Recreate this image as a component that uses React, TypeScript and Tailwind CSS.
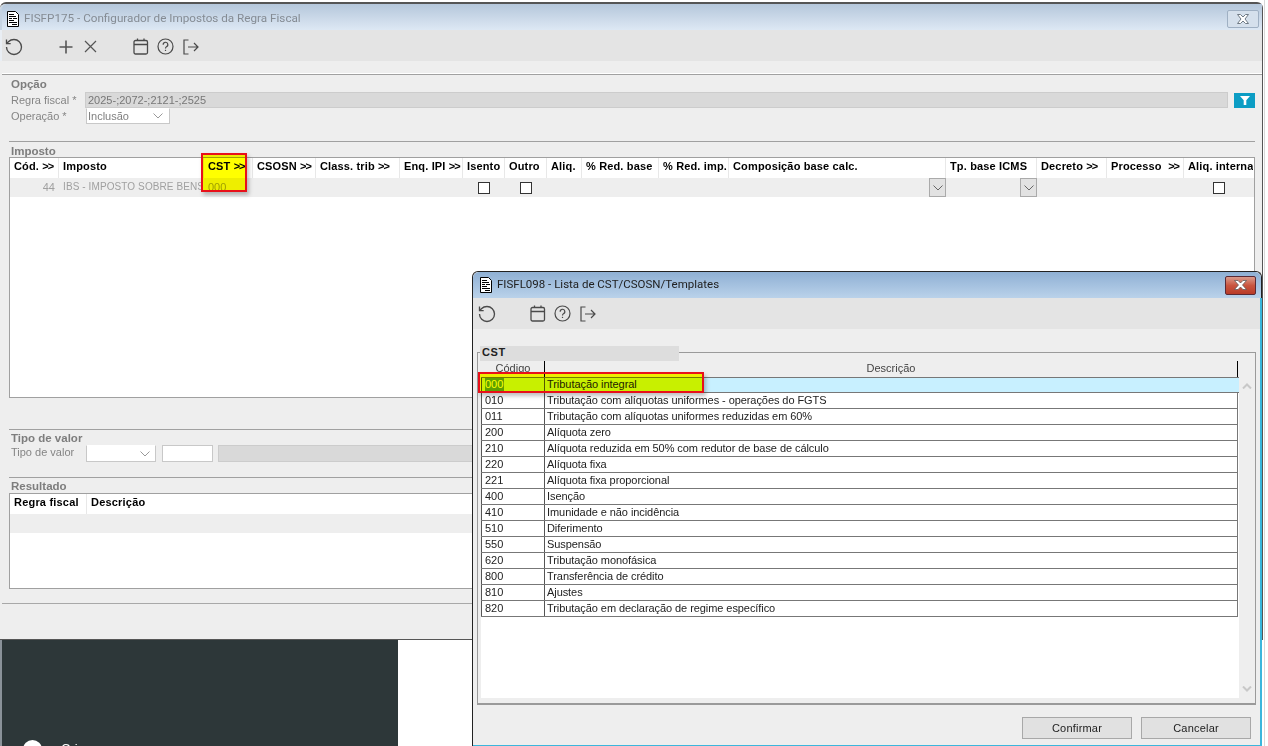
import React from "react";

const body = "font-['Liberation_Sans',Arial,sans-serif]";

const DocIcon = () => (
  <svg width="14" height="16" viewBox="0 0 14 16" className="shrink-0">
    <path d="M1.5 .5H9.5L12.5 3.5V15.5H1.5Z" fill="#fff" stroke="#000" />
    <path d="M3 3.5H8M3 5.5H10M3 7.5H6M7 7.5H11M3 9.5H8M3 11.5H11M6 13.5H11" stroke="#000" />
  </svg>
);

const Undo = () => (
  <svg width="20" height="20" viewBox="0 0 24 24" fill="none" stroke="#4a4a4a" strokeWidth="1.6">
    <path d="M3 12a9 9 0 1 0 9-9 9.75 9.75 0 0 0-6.74 2.74L3 8" />
    <path d="M3 3v5h5" />
  </svg>
);
const Plus = () => (
  <svg width="14" height="14" viewBox="0 0 14 14" stroke="#555" strokeWidth="1.6">
    <path d="M7 0.5V13.5M0.5 7H13.5" />
  </svg>
);
const Cross = () => (
  <svg width="13" height="13" viewBox="0 0 13 13" stroke="#555" strokeWidth="1.2">
    <path d="M1 1L12 12M12 1L1 12" />
  </svg>
);
const Calendar = () => (
  <svg width="16" height="17" viewBox="0 0 16 17" fill="none" stroke="#4a4a4a" strokeWidth="1.3">
    <rect x="1" y="2.5" width="13.5" height="13.5" rx="1.5" />
    <path d="M1 6.5H14.5M4.5 .5V3M11 .5V3" />
  </svg>
);
const Help = () => (
  <svg width="17" height="17" viewBox="0 0 17 17" fill="none" stroke="#4a4a4a" strokeWidth="1.2">
    <circle cx="8.5" cy="8.5" r="7.5" />
    <path d="M6.2 6.8A2.3 2.3 0 1 1 9.4 8.7C8.7 9.1 8.5 9.5 8.5 10.4" />
    <path d="M8.5 11.8V13" />
  </svg>
);
const Exit = () => (
  <svg width="16" height="16" viewBox="0 0 16 16" fill="none" stroke="#4a4a4a" strokeWidth="1.2">
    <path d="M5.5 1H1V15H5.5" />
    <path d="M5 8H15M11 4L15 8L11 12" />
  </svg>
);
const Chevron = ({ c = "#999" }: { c?: string }) => (
  <svg width="10" height="6" viewBox="0 0 10 6" fill="none" stroke={c}>
    <path d="M.5 .5L5 5L9.5 .5" />
  </svg>
);

const cols: [string, string, number][] = [
  ["Cód. ", ">>", 49],
  ["Imposto", "", 145],
  ["CST ", ">>", 49],
  ["CSOSN ", ">>", 63],
  ["Class. trib ", ">>", 84],
  ["Enq. IPI ", ">>", 63],
  ["Isento", "", 42],
  ["Outro", "", 42],
  ["Aliq.", "", 35],
  ["% Red. base", "", 77],
  ["% Red. imp.", "", 70],
  ["Composição base calc.", "", 217],
  ["Tp. base ICMS", "", 91],
  ["Decreto ", ">>", 70],
  ["Processo  ", ">>", 77],
  ["Aliq. interna", "", 69],
];

const Check = () => <span className="block w-3 h-3 border border-[#333] bg-white" />;

const SectionTitle = ({ children }: { children: React.ReactNode }) => (
  <div className="text-[11.5px] leading-[14px] font-bold text-[#7d7d7d]">{children}</div>
);

const rows: [string, string][] = [
  ["010", "Tributação com alíquotas uniformes - operações do FGTS"],
  ["011", "Tributação com alíquotas uniformes reduzidas em 60%"],
  ["200", "Alíquota zero"],
  ["210", "Alíquota reduzida em 50% com redutor de base de cálculo"],
  ["220", "Alíquota fixa"],
  ["221", "Alíquota fixa proporcional"],
  ["400", "Isenção"],
  ["410", "Imunidade e não incidência"],
  ["510", "Diferimento"],
  ["550", "Suspensão"],
  ["620", "Tributação monofásica"],
  ["800", "Transferência de crédito"],
  ["810", "Ajustes"],
  ["820", "Tributação em declaração de regime específico"],
];

export default function App() {
  return (
    <div className={`relative w-[1268px] h-[746px] overflow-hidden bg-white ${body}`}>
      {/* page behind the windows */}
      <div className="absolute left-0 top-[640px] bottom-0 w-[398px] bg-[#2d3739] border-l-2 border-[#8a9299]">
        <div className="absolute left-[21px] top-[100px] w-[19px] h-[19px] rounded-full bg-white" />
        <span className="absolute left-[59px] top-[101px] text-[13px] leading-[15px] text-white">Cri</span>
      </div>
      <div className="absolute left-[1264px] top-[0px] bottom-0 w-px bg-[#d8d8d8]" />

      {/* main window */}
      <div className="absolute left-0 top-[2px] w-[1263px] h-[638px] flex flex-col border-t-2 border-r border-b border-[#555] rounded-t-md bg-[#eeeeee] text-[11px]">
        <div className="h-[26px] shrink-0 flex items-center pt-[3px] pl-[4px] pr-[3px] gap-[4px] rounded-tl-md bg-gradient-to-b from-[#b5c7db] to-[#dde8f4] border-l-2 border-[#c5d3e2]">
          <DocIcon />
          <span className="text-[11.7px] text-[#858c94] font-['Roboto',sans-serif]">FISFP175 - Configurador de Impostos da Regra Fiscal</span>
          <span className="ml-auto w-[32px] h-[18px] flex items-center justify-center rounded-[2px] border border-[#9fb0c3] bg-[#d5e0ec]">
            <svg width="12" height="10" viewBox="0 0 12 10" fill="#fff" stroke="#6f7a85">
              <path d="M.5 .5H3.5L6 3L8.5 .5H11.5L8 5L11.5 9.5H8.5L6 7L3.5 9.5H.5L4 5Z" />
            </svg>
          </span>
        </div>
        <div className="h-[31px] shrink-0 flex items-center pt-[2px] pl-[2px] bg-[#e4e4e4] border-l-2 border-[#e9eef4]">
          <Undo />
          <span className="ml-[35px]"><Plus /></span>
          <span className="ml-[11px]"><Cross /></span>
          <span className="ml-[36px]"><Calendar /></span>
          <span className="ml-[8px]"><Help /></span>
          <span className="ml-[9px]"><Exit /></span>
        </div>
        <div className="h-[14px] shrink-0 border-b border-[#a0a0a0] ml-[2px] shadow-[inset_0_-1px_0_#fff]" />

        {/* Opção */}
        <div className="pl-[11px] pr-[7px] pt-[2px] text-[#858585] h-[66px] shrink-0">
          <SectionTitle>Opção</SectionTitle>
          <div className="flex items-center h-[16px] mt-[1px]">
            <span className="w-[74px] shrink-0 text-[11px]">Regra fiscal *</span>
            <span className="flex-1 h-[16px] pl-[2px] leading-[14px] border border-white outline outline-[#ccc] -outline-offset-1 bg-[#d9d9d9] text-[#777]">2025-;2072-;2121-;2525</span>
            <span className="ml-[6px] w-[21px] h-[15px] flex items-center justify-center bg-[#0c9dc4]">
              <svg width="10" height="9" viewBox="0 0 10 9" fill="#fff"><path d="M0 0H10L6.3 4.2V9H3.7V4.2Z" /></svg>
            </span>
          </div>
          <div className="flex items-center h-[16px]">
            <span className="w-[75px] shrink-0 text-[11px]">Operação *</span>
            <span className="w-[84px] h-[16px] flex items-center justify-between pl-[1px] pr-[6px] border border-[#c8c8c8] border-t-white bg-white text-[#808080]">
              Inclusão <Chevron />
            </span>
          </div>
        </div>

        {/* Imposto */}
        <div className="mx-[9px] w-[1246px] h-[288px] shrink-0 border-t border-[#a0a0a0]">
          <div className="pl-[2px] pt-[2px] h-[15px]"><SectionTitle>Imposto</SectionTitle></div>
          <div className="h-[241px] border border-[#a0a0a0] bg-white overflow-hidden">
            <div className="flex h-[20px]">
              {cols.map(([t, a, w]) => (
                <div key={t} style={{ width: w }} className="shrink-0 pl-[4px] leading-[16px] font-bold text-black whitespace-pre tracking-[0.15px] border-r border-[#e8e8e8] last:border-r-0 overflow-hidden">
                  {t}
                  {a && <span className="tracking-[-1px]">{a}</span>}
                </div>
              ))}
            </div>
            <div className="flex h-[19px] bg-[#eeeeee] text-[#a0a0a0] text-[10px] leading-[18px]">
              <div className="w-[48px] shrink-0 pr-[3px] text-right text-[11px]">44</div>
              <div className="w-[145px] shrink-0 pl-[5px] tracking-[0.1px] whitespace-nowrap overflow-hidden">IBS - IMPOSTO SOBRE BENS</div>
              <div className="w-[49px] shrink-0 pl-[5px] text-[11px]">000</div>
              <div className="w-[210px] shrink-0" />
              <div className="w-[42px] shrink-0 flex items-center justify-center pl-[1px]"><Check /></div>
              <div className="w-[42px] shrink-0 flex items-center justify-center pl-[1px]"><Check /></div>
              <div className="w-[182px] shrink-0" />
              <div className="w-[217px] shrink-0 flex justify-end pl-[1px]"><span className="w-[17px] h-[19px] -mr-px flex items-center justify-center border border-[#aaa] bg-[#e2e2e2]"><Chevron c="#666" /></span></div>
              <div className="w-[91px] shrink-0 flex justify-end"><span className="w-[17px] h-[19px] -mr-px flex items-center justify-center border border-[#aaa] bg-[#e2e2e2]"><Chevron c="#666" /></span></div>
              <div className="w-[147px] shrink-0" />
              <div className="w-[70px] shrink-0 flex items-center justify-center pl-[2px]"><Check /></div>
            </div>
          </div>
        </div>

        {/* Tipo de valor */}
        <div className="mx-[9px] h-[48px] shrink-0 border-t border-[#a0a0a0] pl-[2px] pt-[1px] text-[#858585]">
          <SectionTitle>Tipo de valor</SectionTitle>
          <div className="flex items-center h-[17px]">
            <span className="w-[75px] shrink-0 text-[11px] leading-[14px] -mt-[4px]">Tipo de valor</span>
            <span className="w-[70px] h-[17px] flex items-center justify-end pr-[5px] border border-[#c8c8c8] border-t-white bg-white"><Chevron /></span>
            <span className="ml-[6px] w-[51px] h-[17px] border border-[#c8c8c8] bg-white" />
            <span className="ml-[5px] flex-1 h-[17px] border border-white outline outline-[#ccc] -outline-offset-1 bg-[#d9d9d9]" />
          </div>
        </div>

        {/* Resultado */}
        <div className="mx-[9px] h-[126px] shrink-0 border-t border-[#a0a0a0]">
          <div className="pl-[2px] pt-[1px] h-[15px]"><SectionTitle>Resultado</SectionTitle></div>
          <div className="h-[96px] border border-[#a0a0a0] bg-white">
            <div className="flex h-[20px]">
              <div className="w-[77px] pl-[4px] leading-[16px] font-bold tracking-[0.2px] text-black border-r border-[#e8e8e8]">Regra fiscal</div>
              <div className="pl-[4px] leading-[16px] font-bold tracking-[0.2px] text-black">Descrição</div>
            </div>
            <div className="h-[19px] bg-[#eeeeee]" />
          </div>
        </div>
        <div className="flex-1 border-t border-[#a8a8a8] ml-[2px]" />
      </div>

      {/* highlight on CST column */}
      <div className="absolute left-[201px] top-[153px] w-[46px] h-[39px] border-[2px] border-[#e8101a] shadow-[2px_3px_4px_rgba(0,0,0,0.25)]" />
      <div className="absolute left-[203px] top-[155px] w-[42px] h-[35px] bg-[#ffff00] mix-blend-multiply" />

      {/* dialog */}
      <div className="absolute left-[472px] top-[271px] w-[790px] h-[476px] flex flex-col rounded-t-md border-t border-l border-r border-[#222] bg-[#eeeeee] text-[11px] text-[#222]">
        <div className="h-[26px] shrink-0 flex items-center pl-[6px] pr-[5px] gap-[4px] rounded-t-md bg-gradient-to-b from-[#8fb0d4] to-[#bad2ea]">
          <DocIcon />
          <span className="text-[11.5px] text-[#222] font-['Roboto',sans-serif]">FISFL098 - Lista de CST/CSOSN/Templates</span>
          <span className="ml-auto w-[31px] h-[19px] flex items-center justify-center rounded-[2px] border border-[#5a2a35] bg-gradient-to-b from-[#d99a8c] via-[#c9553f] to-[#b83a28]">
            <svg width="13" height="10" viewBox="0 0 13 10" fill="#fff" stroke="#555" strokeWidth="0.7">
              <path d="M.5 .5H4L6.5 3L9 .5H12.5L8.5 5L12.5 9.5H9L6.5 7L4 9.5H.5L4.5 5Z" />
            </svg>
          </span>
        </div>
        <div className="h-[31px] shrink-0 flex items-center pl-[4px] bg-[#e4e4e4]">
          <Undo />
          <span className="ml-[33px]"><Calendar /></span>
          <span className="ml-[8px]"><Help /></span>
          <span className="ml-[9px]"><Exit /></span>
        </div>
        <div className="relative mx-[4px] mt-[23px] h-[353px] w-[779px] shrink-0 border border-[#9a9a9a] border-b-2 pl-[3px] pt-[8px]">
          <div className="absolute left-[2px] -top-[7px] w-[199px] h-[15px] pl-[2px] bg-[#dddddd] font-bold text-[#222] tracking-[0.6px] leading-[12px]">CST</div>
          <div className="flex h-[16px] w-[757px] text-[#444]">
            <div className="w-[64px] pl-[1px] text-center border-r border-black leading-[14px] bg-[#eeeeee]">Código</div>
            <div className="w-[693px] text-center border-r border-black leading-[14px]">Descrição</div>
          </div>
          <div className="flex h-[321px]">
            <div className="w-[758px] bg-white">
              <div className="flex h-[16px] bg-[#c8f0ff] border-t border-b border-[#777] leading-[13px] relative">
                <div className="w-[64px] shrink-0 border-l border-r border-[#555] pl-[3px]"><span className="inline-block bg-[#5ea000] text-[#ffff60] w-[19px]">000</span></div>
                <div className="pl-[2px] tracking-[-0.05px]">Tributação integral</div>
              </div>
              {rows.map(([c, d]) => (
                <div key={c} className="flex h-[16px] w-[757px] border-b border-r border-[#777] leading-[15px]">
                  <div className="w-[64px] shrink-0 border-l border-r border-[#555] pl-[3px]">{c}</div>
                  <div className="pl-[2px] tracking-[-0.07px]">{d}</div>
                </div>
              ))}
            </div>
            <div className="w-[16px] h-[321px] flex flex-col items-center justify-between pt-[6px] pb-[6px] bg-[#eeeeee]">
              <svg width="10" height="6" viewBox="0 0 10 6" fill="none" stroke="#c8c8c8" strokeWidth="2"><path d="M1 5.5L5 1.5L9 5.5" /></svg>
              <svg width="10" height="6" viewBox="0 0 10 6" fill="none" stroke="#c8c8c8" strokeWidth="2"><path d="M1 .5L5 4.5L9 .5" /></svg>
            </div>
          </div>
        </div>
        <div className="flex justify-end gap-[9px] pr-[10px] mt-[12px]">
          <button className="w-[110px] h-[22px] border border-[#a8a8a8] bg-[#e1e1e1] text-[#222] tracking-[0.2px]">Confirmar</button>
          <button className="w-[110px] h-[22px] border border-[#a8a8a8] bg-[#e1e1e1] text-[#222] tracking-[0.2px]">Cancelar</button>
        </div>
        <div className="absolute left-0 right-0 top-[473px] h-[2px] bg-[#3bb6dc]" />
        <div className="absolute -right-px top-[26px] bottom-0 w-[2px] bg-[#3bb6dc]" />
      </div>

      {/* highlight on selected row */}
      <div className="absolute left-[478px] top-[372px] w-[226px] h-[21px] border-[2px] border-[#e8101a] shadow-[2px_3px_4px_rgba(0,0,0,0.25)]" />
      <div className="absolute left-[480px] top-[374px] w-[222px] h-[17px] bg-[#ffff00] mix-blend-multiply" />
    </div>
  );
}
